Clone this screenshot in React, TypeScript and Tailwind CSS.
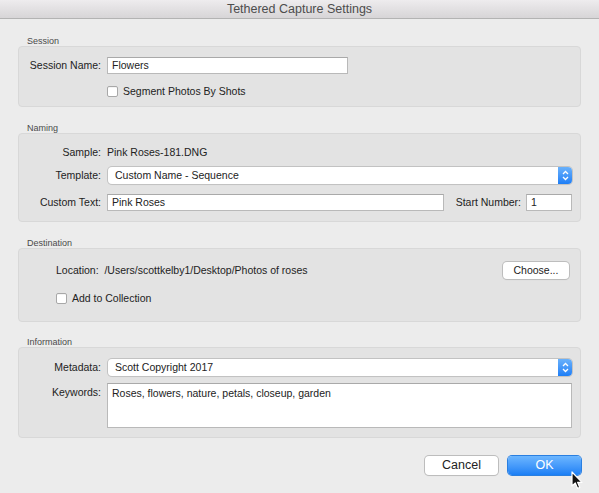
import React from 'react';

const font = { fontFamily: '"Liberation Sans", Arial, sans-serif' };

const GroupLabel = ({ children }: { children: React.ReactNode }) => (
    <div className="h-[10px] leading-[10px] pl-[9px] text-[9px] text-[#4a4a4a]">{children}</div>
);

const GroupBox = ({ className = '', children }: { className?: string; children: React.ReactNode }) => (
    <div className={`rounded-[4px] border border-[#d8d8d8] bg-[#e3e3e3] ${className}`}>{children}</div>
);

const TextInput = ({ value, className = '' }: { value: string; className?: string }) => (
    <div
        className={`h-[17px] border border-[#b9b9b9] border-t-[#a9a9a9] bg-white pl-[4px] text-[10.5px] leading-[15px] text-[#222] ${className}`}
    >
        {value}
    </div>
);

const Checkbox = ({ label }: { label: string }) => (
    <div className="flex items-center gap-[5px]">
        <div className="h-[11px] w-[11px] rounded-[2px] border border-[#a8a8a8] bg-white shadow-[inset_0_1px_0_#f4f4f4]" />
        <span className="text-[10.5px] text-[#222]">{label}</span>
    </div>
);

const Stepper = () => (
    <div className="flex h-[17px] w-[14px] items-center justify-center rounded-r-[4px] bg-gradient-to-b from-[#69b1fb] to-[#1c7ef6]">
        <svg width="7" height="11" viewBox="0 0 7 11" fill="none" stroke="white" strokeWidth="1.3">
            <path d="M1 4L3.5 1.5L6 4" />
            <path d="M1 7L3.5 9.5L6 7" />
        </svg>
    </div>
);

const Select = ({ value }: { value: string }) => (
    <div className="flex h-[17px] flex-1 items-stretch rounded-[4px] bg-white shadow-[0_0_0_1px_#c2c2c2,0_1px_1px_rgba(0,0,0,0.08)]">
        <div className="flex-1 pl-[7px] text-[10.5px] leading-[17px] text-[#222]">{value}</div>
        <Stepper />
    </div>
);

const Label = ({ children }: { children: React.ReactNode }) => (
    <div className="w-[83px] shrink-0 pr-[1px] text-right text-[10.5px] text-[#222]">{children}</div>
);

const Cursor = () => (
    <svg className="absolute left-[571px] top-[471px]" width="12" height="19" viewBox="0 0 12 19">
        <path d="M1 1L1 15L4.3 12L6.6 17.4L8.8 16.4L6.6 11.3L11 11.3Z" fill="#111" stroke="white" strokeWidth="1.2" strokeLinejoin="round" />
    </svg>
);

export default function App() {
    return (
        <div className="relative h-[493px] w-[599px] overflow-hidden bg-[#ececec]" style={font}>
            {/* title bar */}
            <div className="flex h-[19px] items-center justify-center border-b border-[#b3b3b3] bg-gradient-to-b from-[#eeecee] to-[#d7d5d7]">
                <span className="text-[12.5px] text-[#4d4d4d]">Tethered Capture Settings</span>
            </div>

            <div className="flex flex-col px-[18px] pt-[17px]">
                {/* Session */}
                <GroupLabel>Session</GroupLabel>
                <GroupBox className="h-[61px] pt-[10px] pr-[232px]">
                    <div className="flex items-center gap-[5px]">
                        <Label>Session Name:</Label>
                        <TextInput value="Flowers" className="flex-1" />
                    </div>
                    <div className="mt-[10px] pl-[88px]">
                        <Checkbox label="Segment Photos By Shots" />
                    </div>
                </GroupBox>

                {/* Naming */}
                <div className="mt-[16px]">
                    <GroupLabel>Naming</GroupLabel>
                </div>
                <GroupBox className="h-[89px] pt-[12px] pr-[8px]">
                    <div className="flex h-[14px] items-center gap-[5px]">
                        <Label>Sample:</Label>
                        <span className="text-[10.5px] text-[#222]">Pink Roses-181.DNG</span>
                    </div>
                    <div className="mt-[7px] flex items-center gap-[6px]">
                        <Label>Template:</Label>
                        <Select value="Custom Name - Sequence" />
                    </div>
                    <div className="mt-[10px] flex items-center gap-[5px]">
                        <Label>Custom Text:</Label>
                        <TextInput value="Pink Roses" className="flex-1" />
                        <span className="ml-[7px] text-[10.5px] text-[#222]">Start Number:</span>
                        <TextInput value="1" className="w-[46px]" />
                    </div>
                </GroupBox>

                {/* Destination */}
                <div className="mt-[16px]">
                    <GroupLabel>Destination</GroupLabel>
                </div>
                <GroupBox className="h-[74px] pt-[13px] pl-[37px] pr-[11px]">
                    <div className="flex items-center">
                        <span className="text-[10.5px] text-[#222]">Location:&nbsp; /Users/scottkelby1/Desktop/Photos of roses</span>
                        <div className="ml-auto flex h-[17px] w-[66px] items-center justify-center rounded-[4px] bg-white text-[10.5px] text-[#222] shadow-[0_0_0_1px_#bdbdbd,0_1px_1px_rgba(0,0,0,0.12)]">
                            Choose...
                        </div>
                    </div>
                    <div className="mt-[12px]">
                        <Checkbox label="Add to Collection" />
                    </div>
                </GroupBox>

                {/* Information */}
                <div className="mt-[15px]">
                    <GroupLabel>Information</GroupLabel>
                </div>
                <GroupBox className="h-[91px] pt-[11px] pr-[8px]">
                    <div className="flex items-center gap-[6px]">
                        <Label>Metadata:</Label>
                        <Select value="Scott Copyright 2017" />
                    </div>
                    <div className="mt-[7px] flex items-start gap-[5px]">
                        <div className="pt-[2px]">
                            <Label>Keywords:</Label>
                        </div>
                        <div className="h-[45px] flex-1 border border-[#b9b9b9] border-t-[#a9a9a9] bg-white pl-[4px] pt-[2px] text-[10.5px] text-[#222]">
                            Roses, flowers, nature, petals, closeup, garden
                        </div>
                    </div>
                </GroupBox>

                {/* buttons */}
                <div className="mt-[18px] flex justify-end gap-[10px]">
                    <div className="flex h-[19px] w-[73px] items-center justify-center rounded-[4px] bg-white text-[12.5px] text-[#222] shadow-[0_0_0_1px_#bdbdbd,0_1px_1px_rgba(0,0,0,0.12)]">
                        Cancel
                    </div>
                    <div className="flex h-[19px] w-[73px] items-center justify-center rounded-[4px] bg-gradient-to-b from-[#6cb6ff] to-[#1a7ff5] text-[12.5px] text-white shadow-[0_0_0_1px_#2a7fe0]">
                        OK
                    </div>
                </div>
            </div>
            <Cursor />
        </div>
    );
}
